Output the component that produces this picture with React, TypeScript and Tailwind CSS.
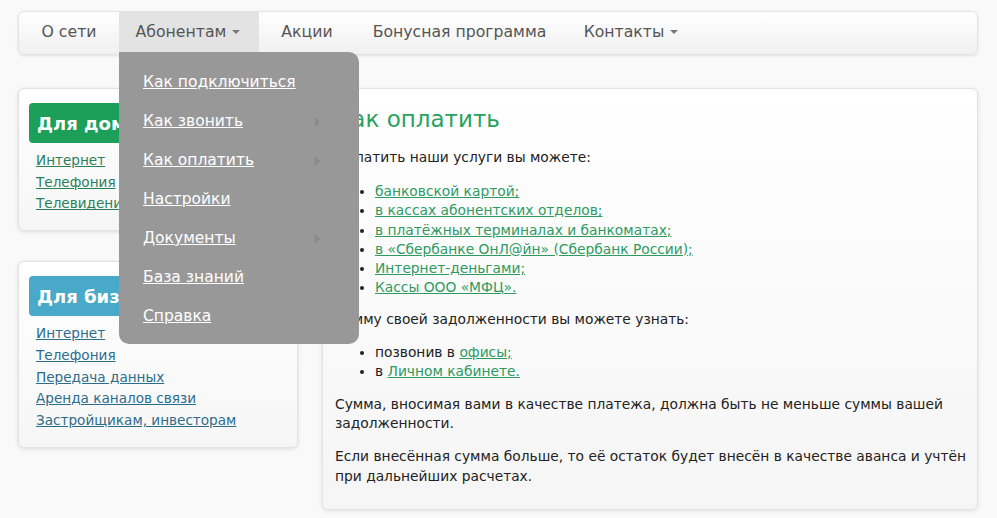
import React from 'react';

const NAV = [
  { label: 'О сети', w: 'w-[100px]' },
  { label: 'Абонентам', w: 'w-[140px] pr-[2px]', caret: true, active: true },
  { label: 'Акции', w: 'w-[96px]' },
  { label: 'Бонусная программа', w: 'w-[209px]' },
  { label: 'Контакты', w: 'w-[134px]', caret: true },
];

const MENU = [
  { label: 'Как подключиться' },
  { label: 'Как звонить', sub: true },
  { label: 'Как оплатить', sub: true },
  { label: 'Настройки' },
  { label: 'Документы', sub: true },
  { label: 'База знаний' },
  { label: 'Справка' },
];

const PAY_WAYS = [
  'банковской картой;',
  'в кассах абонентских отделов;',
  'в платёжных терминалах и банкоматах;',
  'в «Сбербанке ОнЛ@йн» (Сбербанк России);',
  'Интернет-деньгами;',
  'Кассы ООО «МФЦ».',
];

const Caret = () => (
  <span className="ml-[6px] inline-block h-0 w-0 border-x-[4px] border-t-[4px] border-x-transparent border-t-[#777] align-middle" />
);

const SideBox = ({ title, head, link, items }: { title: string; head: string; link: string; items: string[] }) => (
  <div className="rounded-[6px] border border-[#e2e2e2] bg-gradient-to-b from-white to-[#f6f6f6] px-[10px] pb-[15px] pt-[14px] shadow-[0_1px_4px_rgba(0,0,0,0.12)]">
    <div className={`flex h-[40px] items-center rounded-[4px] px-[8px] text-[18px] font-bold text-white ${head}`}>{title}</div>
    <ul className="mt-[7px] px-[7px] text-[13.6px] leading-[21.7px]">
      {items.map(i => (
        <li key={i}>
          <a className={`underline ${link}`}>{i}</a>
        </li>
      ))}
    </ul>
  </div>
);

export default function App() {
  return (
    <div className="min-h-[518px] bg-[#f9f9f9] px-[18px] pt-[11px] font-['DejaVu_Sans',Verdana,sans-serif] text-[#222]">
      <nav className="relative z-10 flex h-[44px] w-[960px] items-stretch rounded-[6px] border border-[#e3e3e3] bg-gradient-to-b from-white to-[#f0f0f0] shadow-[0_1px_3px_rgba(0,0,0,0.1)]">
        {NAV.map(n => (
          <div
            key={n.label}
            className={`relative flex items-center justify-center pb-[2px] text-[15.7px] text-[#555] ${n.w} ${n.active ? 'bg-[#e3e3e3]' : ''}`}
          >
            {n.label}
            {n.caret && <Caret />}
            {n.active && (
              <div className="absolute left-0 top-[40px] z-50 w-[240px] rounded-[10px] rounded-tl-none bg-[#989898] pb-[8px] pt-[11px]">
                {MENU.map(m => (
                  <div key={m.label} className="flex h-[39px] items-center justify-between pl-[24px] pr-[39px]">
                    <a className="text-[15.5px] text-white underline">{m.label}</a>
                    {m.sub && (
                      <span className="h-0 w-0 border-y-[5px] border-l-[5px] border-y-transparent border-l-[#8a8a8a]" />
                    )}
                  </div>
                ))}
              </div>
            )}
          </div>
        ))}
      </nav>

      <div className="mt-[33px] flex w-[960px] items-start gap-[24px]">
        <div className="flex w-[280px] flex-col gap-[30px]">
          <SideBox
            title="Для дома"
            head="bg-[#1c9f58]"
            link="text-[#2b7f5a]"
            items={['Интернет', 'Телефония', 'Телевидение']}
          />
          <SideBox
            title="Для бизнеса"
            head="bg-[#48a9c9]"
            link="text-[#2c6c8c]"
            items={['Интернет', 'Телефония', 'Передача данных', 'Аренда каналов связи', 'Застройщикам, инвесторам']}
          />
        </div>

        <main className="h-[422px] flex-1 rounded-[6px] border border-[#e2e2e2] bg-gradient-to-b from-white to-[#f5f5f5] pl-[12px] pr-[10px] pt-[15px] text-[13.8px] leading-[19.2px] shadow-[0_1px_4px_rgba(0,0,0,0.1)]">
          <h1 className="text-[23px] leading-[30px] text-[#27a35e]">Как оплатить</h1>
          <p className="mt-[14px]">Оплатить наши услуги вы можете:</p>
          <ul className="mt-[15px] list-disc pl-[40px]">
            {PAY_WAYS.map(w => (
              <li key={w}>
                <a className="text-[#2e9a62] underline">{w}</a>
              </li>
            ))}
          </ul>
          <p className="mt-[13px]">Сумму своей задолженности вы можете узнать:</p>
          <ul className="mt-[13px] list-disc pl-[40px]">
            <li>
              позвонив в <a className="text-[#2e9a62] underline">офисы;</a>
            </li>
            <li>
              в <a className="text-[#2e9a62] underline">Личном кабинете.</a>
            </li>
          </ul>
          <p className="mt-[14px]">
            Сумма, вносимая вами в качестве платежа, должна быть не меньше суммы вашей задолженности.
          </p>
          <p className="mt-[14px]">
            Если внесённая сумма больше, то её остаток будет внесён в качестве аванса и учтён при дальнейших расчетах.
          </p>
        </main>
      </div>
    </div>
  );
}
